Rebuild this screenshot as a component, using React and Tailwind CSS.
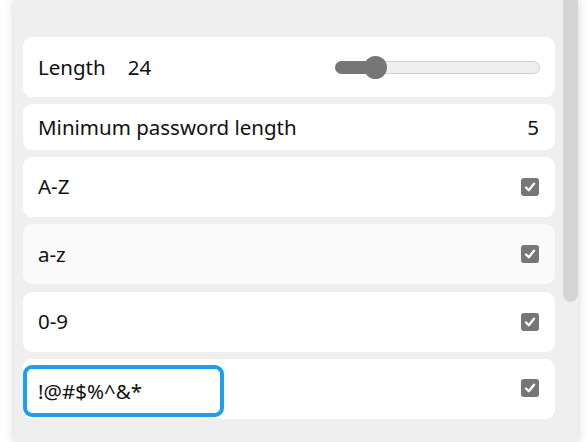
import React from "react";

function Check() {
  return (
    <div className="w-[18px] h-[18px] rounded-[3px] bg-[#767676] flex items-center justify-center">
      <svg width="12" height="12" viewBox="0 0 12 12">
        <path d="M2 6.5 L4.8 9.2 L10 2.8" fill="none" stroke="white" strokeWidth="2.4" strokeLinecap="round" strokeLinejoin="round" />
      </svg>
    </div>
  );
}

function CheckRow({ label, bg = "bg-white" }) {
  return (
    <div className={`h-[60.2px] shrink-0 rounded-[9px] ${bg} flex items-center justify-between pl-[15px] pr-[16px]`}>
      <span>{label}</span>
      <Check />
    </div>
  );
}

export default function App() {
  return (
    <div
      className="w-[586px] h-[442px] bg-white flex pl-[14px] pr-[8px] overflow-hidden text-[20.5px] text-[#111]"
      style={{ fontFamily: '"Noto Sans", "Open Sans", sans-serif' }}
    >
      <div className="flex-1 flex bg-[#efefef] shadow-[0_0_10px_rgba(0,0,0,0.18)]">
        <div className="flex-1 flex flex-col gap-[7.2px] pt-[37px] pl-[9px] pr-[8px]">
          <div className="h-[60.2px] shrink-0 rounded-[9px] bg-white flex items-center pl-[15px] pr-[15px]">
            <span>Length</span>
            <span className="ml-[22px]">24</span>
            <div className="ml-auto w-[205px] h-[13px] rounded-full bg-[#efefef] border border-[#cfcfcf] relative">
              <div className="absolute left-[-1px] top-[-1px] h-[13px] w-[40px] rounded-full bg-[#767676]" />
              <div className="absolute left-[28px] top-[-6px] w-[23px] h-[23px] rounded-full bg-[#767676]" />
            </div>
          </div>
          <div className="h-[45.2px] shrink-0 rounded-[9px] bg-white flex items-center justify-between pl-[15px] pr-[16px]">
            <span>Minimum password length</span>
            <span>5</span>
          </div>
          <CheckRow label="A-Z" />
          <CheckRow label="a-z" bg="bg-[#fafafa]" />
          <CheckRow label="0-9" />
          <div className="h-[60.2px] shrink-0 rounded-[9px] bg-white flex items-end justify-between pr-[16px] pb-[2px]">
            <div className="w-[201px] h-[52px] rounded-[9px] border-[4px] border-[#1c9fee] bg-white flex items-center pl-[11px]">
              <span>!@#$%^&amp;*</span>
            </div>
            <div className="self-center">
              <Check />
            </div>
          </div>
        </div>
        <div className="w-[15px] flex flex-col">
          <div className="h-[302px] bg-[#d4d4d4] rounded-b-full" />
        </div>
      </div>
    </div>
  );
}
